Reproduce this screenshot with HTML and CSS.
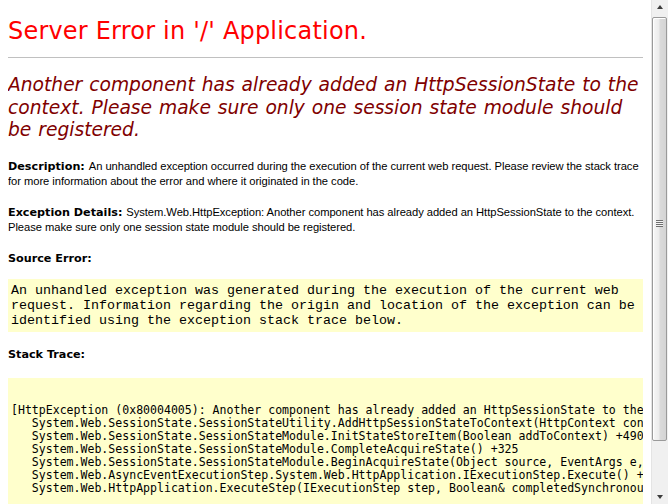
FILE: index.html
```html
<!DOCTYPE html>
<html>
<head>
<meta charset="utf-8">
<title>Another component has already added an HttpSessionState to the context.</title>
<link rel="stylesheet" href="styles.css">
</head>
<body>
<h1 class="title">Server Error in '/' Application.</h1>
<hr class="rule">
<h2 class="message"><i>Another component has already added an HttpSessionState to the context. Please make sure only one session state module should be registered.</i></h2>
<div class="info">
  <p class="row"><b class="label">Description: </b>An unhandled exception occurred during the execution of the current web request. Please review the stack trace for more information about the error and where it originated in the code.</p>
  <p class="row"><b class="label">Exception Details: </b>System.Web.HttpException: Another component has already added an HttpSessionState to the context. Please make sure only one session state module should be registered.</p>
  <p class="heading heading-source">Source Error:</p>
  <div class="box source"><code class="source-code">An unhandled exception was generated during the execution of the current web request. Information regarding the origin and location of the exception can be identified using the exception stack trace below.</code></div>
  <p class="heading heading-stack">Stack Trace:</p>
  <div class="box stack"><pre class="stack-code">

[HttpException (0x80004005): Another component has already added an HttpSessionState to the context. Please make sure only one session state module should be registered.]
   System.Web.SessionState.SessionStateUtility.AddHttpSessionStateToContext(HttpContext context, IHttpSessionState container) +9823344
   System.Web.SessionState.SessionStateModule.InitStateStoreItem(Boolean addToContext) +490
   System.Web.SessionState.SessionStateModule.CompleteAcquireState() +325
   System.Web.SessionState.SessionStateModule.BeginAcquireState(Object source, EventArgs e, AsyncCallback cb, Object extraData) +1233
   System.Web.AsyncEventExecutionStep.System.Web.HttpApplication.IExecutionStep.Execute() +80
   System.Web.HttpApplication.ExecuteStep(IExecutionStep step, Boolean&amp; completedSynchronously) +165
</pre></div>
</div>

<div class="scrollbar" aria-hidden="true">
  <div class="sb-btn sb-up"><span class="sb-arrow sb-arrow-up"></span></div>
  <div class="sb-track">
    <div class="sb-thumb"><span class="sb-grip"></span></div>
  </div>
  <div class="sb-btn sb-down"><span class="sb-arrow sb-arrow-down"></span></div>
</div>
</body>
</html>
```

FILE: styles.css
```css
html {
  overflow: hidden;
  background: #ffffff;
}

body {
  margin: 0 25px 0 8px;
  font-family: "DejaVu Sans", Verdana, sans-serif;
  font-size: 11.2px;
  color: #000000;
}

.title {
  margin: 17px 0 0;
  font-size: 24px;
  line-height: 29px;
  font-weight: normal;
  letter-spacing: 0.2px;
  color: #ff0000;
}

.rule {
  margin: 11px 0 0;
  height: 0;
  border: 0;
  border-top: 1px solid #c0c0c0;
}

.message {
  margin: 16px 0 0;
  font-size: 18.67px;
  line-height: 22.67px;
  font-weight: normal;
  word-spacing: 1px;
  color: #800000;
}

.info {
  margin-top: 17px;
  font-family: "Liberation Sans", Arial, sans-serif;
  font-size: 11.2px;
  line-height: 15.3px;
  letter-spacing: -0.05px;
}

.row {
  margin: 0 0 15.3px;
}

.label {
  font-family: "DejaVu Sans", Verdana, sans-serif;
  font-weight: bold;
  letter-spacing: 0;
}

.heading {
  margin: 0;
  font-family: "DejaVu Sans", Verdana, sans-serif;
  font-weight: bold;
  letter-spacing: 0;
}

.heading-source {
  margin-bottom: 12.7px;
}

.heading-stack {
  margin-bottom: 15.3px;
}

.box {
  background: #ffffcc;
}

.source {
  margin-bottom: 15.3px;
  padding: 4px 3px 3px;
}

.source-code {
  font-family: "Liberation Mono", "Courier New", monospace;
  font-size: 13.33px;
  line-height: 15.1px;
  letter-spacing: 0;
}

.stack {
  margin-right: -25px;
  overflow: hidden;
}

.stack-code {
  margin: 0;
  padding: 13.5px 3px 12px;
  font-family: "DejaVu Sans Mono", monospace;
  font-size: 11.55px;
  line-height: 13px;
  letter-spacing: 0;
}

.scrollbar {
  position: fixed;
  top: 0;
  right: 0;
  width: 17px;
  height: 100%;
  display: flex;
  flex-direction: column;
  background: #f0f0f0;
  border-left: 1px solid #e4e4e4;
  box-sizing: border-box;
}

.sb-btn {
  height: 17px;
  flex: none;
  display: flex;
  align-items: center;
  justify-content: center;
}

.sb-arrow {
  width: 0;
  height: 0;
  border-left: 3.5px solid transparent;
  border-right: 3.5px solid transparent;
}

.sb-arrow-up {
  border-bottom: 4px solid #3c3c3c;
  margin-top: -3px;
}

.sb-arrow-down {
  border-top: 4px solid #3c3c3c;
  margin-top: 3px;
}

.sb-track {
  flex: 1;
  padding: 0 0 46px 0;
  display: flex;
}

.sb-thumb {
  flex: 1;
  margin-right: 1px;
  border: 1px solid #9a9a9a;
  border-radius: 2px;
  background: linear-gradient(to right, #f7f7f7 0%, #ececec 45%, #dadada 55%, #d4d4d4 100%);
  box-shadow: inset 1px 1px 0 #ffffff;
  display: flex;
  align-items: center;
  justify-content: center;
}

.sb-grip {
  width: 7px;
  height: 7px;
  margin-top: -12px;
  background: repeating-linear-gradient(to bottom, #6f6f6f 0, #6f6f6f 1px, #f4f4f4 1px, #f4f4f4 2px);
}
```
